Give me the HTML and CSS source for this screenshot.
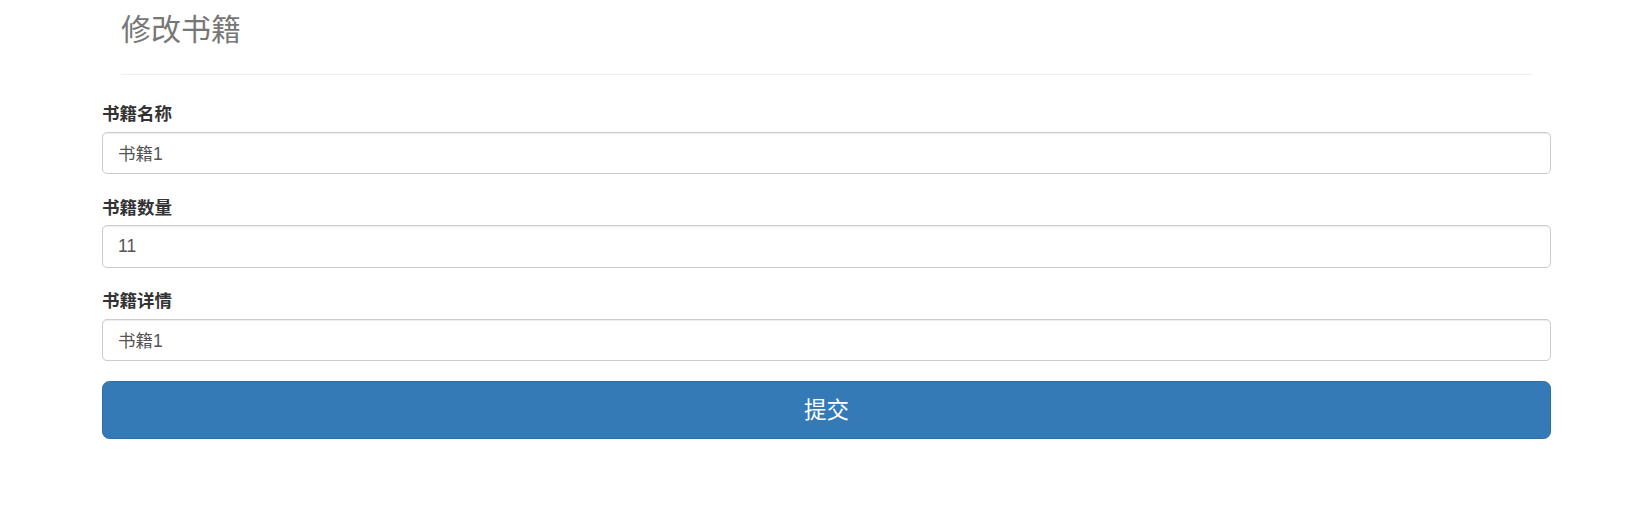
FILE: index.html
```html
<!DOCTYPE html>
<html lang="zh-CN">
<head>
<meta charset="utf-8">
<title>修改书籍</title>
<link rel="stylesheet" href="styles.css">
</head>
<body>
<div class="container">
  <div class="page-header">
    <h1 class="title">修改书籍</h1>
  </div>
  <form class="book-form">
    <div class="form-group">
      <label class="form-label">书籍名称</label>
      <input class="form-control" type="text" value="书籍1">
    </div>
    <div class="form-group">
      <label class="form-label">书籍数量</label>
      <input class="form-control" type="text" value="11">
    </div>
    <div class="form-group">
      <label class="form-label">书籍详情</label>
      <input class="form-control" type="text" value="书籍1">
    </div>
    <button class="btn-submit" type="button">提交</button>
  </form>
</div>
</body>
</html>
```

FILE: styles.css
```css
html, body {
  margin: 0;
  padding: 0;
  background: #fff;
}
body {
  font-family: "Liberation Sans", Arial, "Noto Sans CJK SC", sans-serif;
  color: #333;
}
.container {
  width: 1449px;
  margin-left: 102px;
}
.page-header {
  margin: 0 19px;
  padding: 13px 0 28px;
  border-bottom: 1px solid #eee;
}
.title {
  margin: 0;
  font-size: 30px;
  line-height: 33px;
  font-weight: 400;
  color: #777;
}
.book-form {
  margin-top: 25px;
  display: flex;
  flex-direction: column;
}
.form-group {
  display: flex;
  flex-direction: column;
  margin-bottom: 19.5px;
}
.form-label {
  font-size: 17.5px;
  line-height: 25px;
  font-weight: 700;
  color: #333;
  padding-top: 2px;
  margin-bottom: 4.5px;
}
.form-control {
  box-sizing: border-box;
  height: 42.5px;
  width: 100%;
  padding: 0 15px;
  font-family: "Liberation Sans", Arial, "Noto Sans CJK SC", sans-serif;
  font-size: 17.5px;
  color: #555;
  background: #fff;
  border: 1px solid #ccc;
  border-radius: 5px;
  box-shadow: inset 0 1px 1px rgba(0,0,0,.075);
  outline: none;
}
.btn-submit {
  box-sizing: border-box;
  margin-top: 0.5px;
  height: 57.5px;
  width: 100%;
  padding: 3px 0 0;
  background: #337ab7;
  border: 1px solid #2e6da4;
  border-radius: 7.5px;
  color: #fff;
  font-family: "Liberation Sans", Arial, "Noto Sans CJK SC", sans-serif;
  font-size: 22.5px;
  line-height: 1;
  cursor: pointer;
}
```
